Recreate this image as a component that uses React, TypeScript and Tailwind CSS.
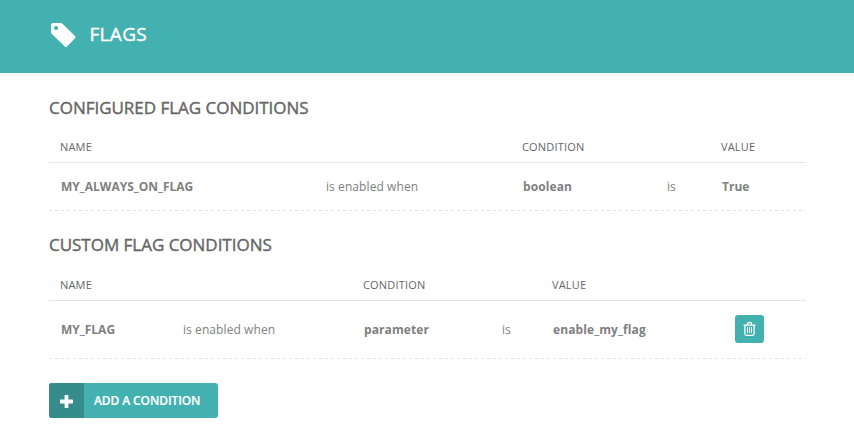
import React from "react";

const columnsConfigured = "grid grid-cols-[266px_196px_144px_55px_96px]";
const columnsCustom = "grid grid-cols-[122px_181px_138px_51px_182px_83px]";

function TagIcon() {
  return (
    <svg className="h-[26px] w-[26px]" viewBox="0 0 26 26" fill="white" fillRule="evenodd" aria-hidden="true">
      <path d="M2.2 0H9.6Q10.8 0 11.8 1L24.2 13.3Q25 14.2 24.2 15.1L15.9 23.8Q15 24.7 14.1 23.8L1.1 11.2Q0 10.1 0 8.8V2.2Q0 0 2.2 0ZM5.1 2.9A2.1 2.1 0 1 0 5.1 7.1A2.1 2.1 0 1 0 5.1 2.9Z" />
    </svg>
  );
}

function BinIcon() {
  return (
    <svg className="h-[14px] w-[13px]" viewBox="0 0 13 14" fill="none" stroke="white" aria-hidden="true">
      <path d="M4.5 2.5V1.8Q4.5 .7 5.4 .7H7.6Q8.5 .7 8.5 1.8V2.5M.5 3H12.5M1.9 3.5V11.8Q1.9 13.3 3.3 13.3H9.7Q11.1 13.3 11.1 11.8V3.5" strokeWidth="1.25" />
      <path d="M4.5 5V11M6.5 5V11M8.5 5V11" strokeWidth="1" />
    </svg>
  );
}

function DashedRule() {
  return <div className="h-px bg-[repeating-linear-gradient(to_right,#e1e1e1_0px,#e1e1e1_3px,transparent_3px,transparent_6px)]" />;
}

function SectionTitle({ children }: { children: React.ReactNode }) {
  return (
    <h2 className="h-[22px] text-[17px] leading-[22px] font-normal tracking-[-0.02px] text-[#666] [-webkit-text-stroke:0.4px_#666]">
      {children}
    </h2>
  );
}

export default function App() {
  return (
    <div className="h-[431px] overflow-hidden bg-white font-['Open_Sans',sans-serif] text-[12px] text-[#808080]">
      <header className="flex h-[73px] bg-[#43b1b0] pt-[23px] pl-[51px] text-white">
        <TagIcon />
        <h1 className="ml-[12.5px] text-[19px] leading-[22px] font-normal tracking-[0.3px] [-webkit-text-stroke:0.4px_white]">FLAGS</h1>
      </header>
      <main className="mr-12 ml-[49px] pt-6">
        <SectionTitle>CONFIGURED FLAG CONDITIONS</SectionTitle>
        <div className={`${columnsConfigured} mt-[12px] h-[32px] border-b border-[#e6e6e6] pl-[11px] text-[11px] leading-[31px] tracking-[0.18px] text-[#666]`}>
          <span>NAME</span><span /><span>CONDITION</span><span /><span>VALUE</span>
        </div>
        <div className={`${columnsConfigured} h-[47px] pl-3 leading-[47px]`}>
          <b>MY_ALWAYS_ON_FLAG</b><span className="-ml-px tracking-[0.08px]">is enabled when</span><b className="tracking-[0.1px]">boolean</b><span>is</span><b>True</b>
        </div>
        <DashedRule />
        <div className="h-[23px]" />
        <SectionTitle>CUSTOM FLAG CONDITIONS</SectionTitle>
        <div className={`${columnsCustom} mt-[13px] h-[32px] border-b border-[#e6e6e6] pl-[11px] text-[11px] leading-[31px] tracking-[0.18px] text-[#666]`}>
          <span>NAME</span><span /><span>CONDITION</span><span /><span>VALUE</span><span />
        </div>
        <div className={`${columnsCustom} h-[57px] pl-3 leading-[57px]`}>
          <b>MY_FLAG</b><span className="tracking-[0.08px]">is enabled when</span><b className="tracking-[0.1px]">parameter</b><span>is</span><b className="tracking-[0.1px]">enable_my_flag</b>
          <button aria-label="Delete" className="mt-[14px] flex h-7 w-[29px] items-center justify-center rounded-[3px] bg-[#43b1b0]"><BinIcon /></button>
        </div>
        <DashedRule />
        <button className="mt-6 flex h-[35px] w-[169px] overflow-hidden rounded-[3px] bg-[#43b1b0] text-[12px] leading-[35px] font-semibold tracking-[-0.1px] text-white">
          <span className="flex h-full w-[35px] items-center justify-center bg-[#358c8b]">
            <svg className="mt-[2px] h-[13px] w-[13px]" viewBox="0 0 13 13" fill="white" aria-hidden="true"><path d="M5.2 0H7.8Q8.4 0 8.4 .6V4.6H12.4Q13 4.6 13 5.2V7.8Q13 8.4 12.4 8.4H8.4V12.4Q8.4 13 7.8 13H5.2Q4.6 13 4.6 12.4V8.4H.6Q0 8.4 0 7.8V5.2Q0 4.6 .6 4.6H4.6V.6Q4.6 0 5.2 0Z" /></svg>
          </span>
          <span className="ml-[10px] [-webkit-text-stroke:0.2px_white]">ADD A CONDITION</span>
        </button>
      </main>
    </div>
  );
}
